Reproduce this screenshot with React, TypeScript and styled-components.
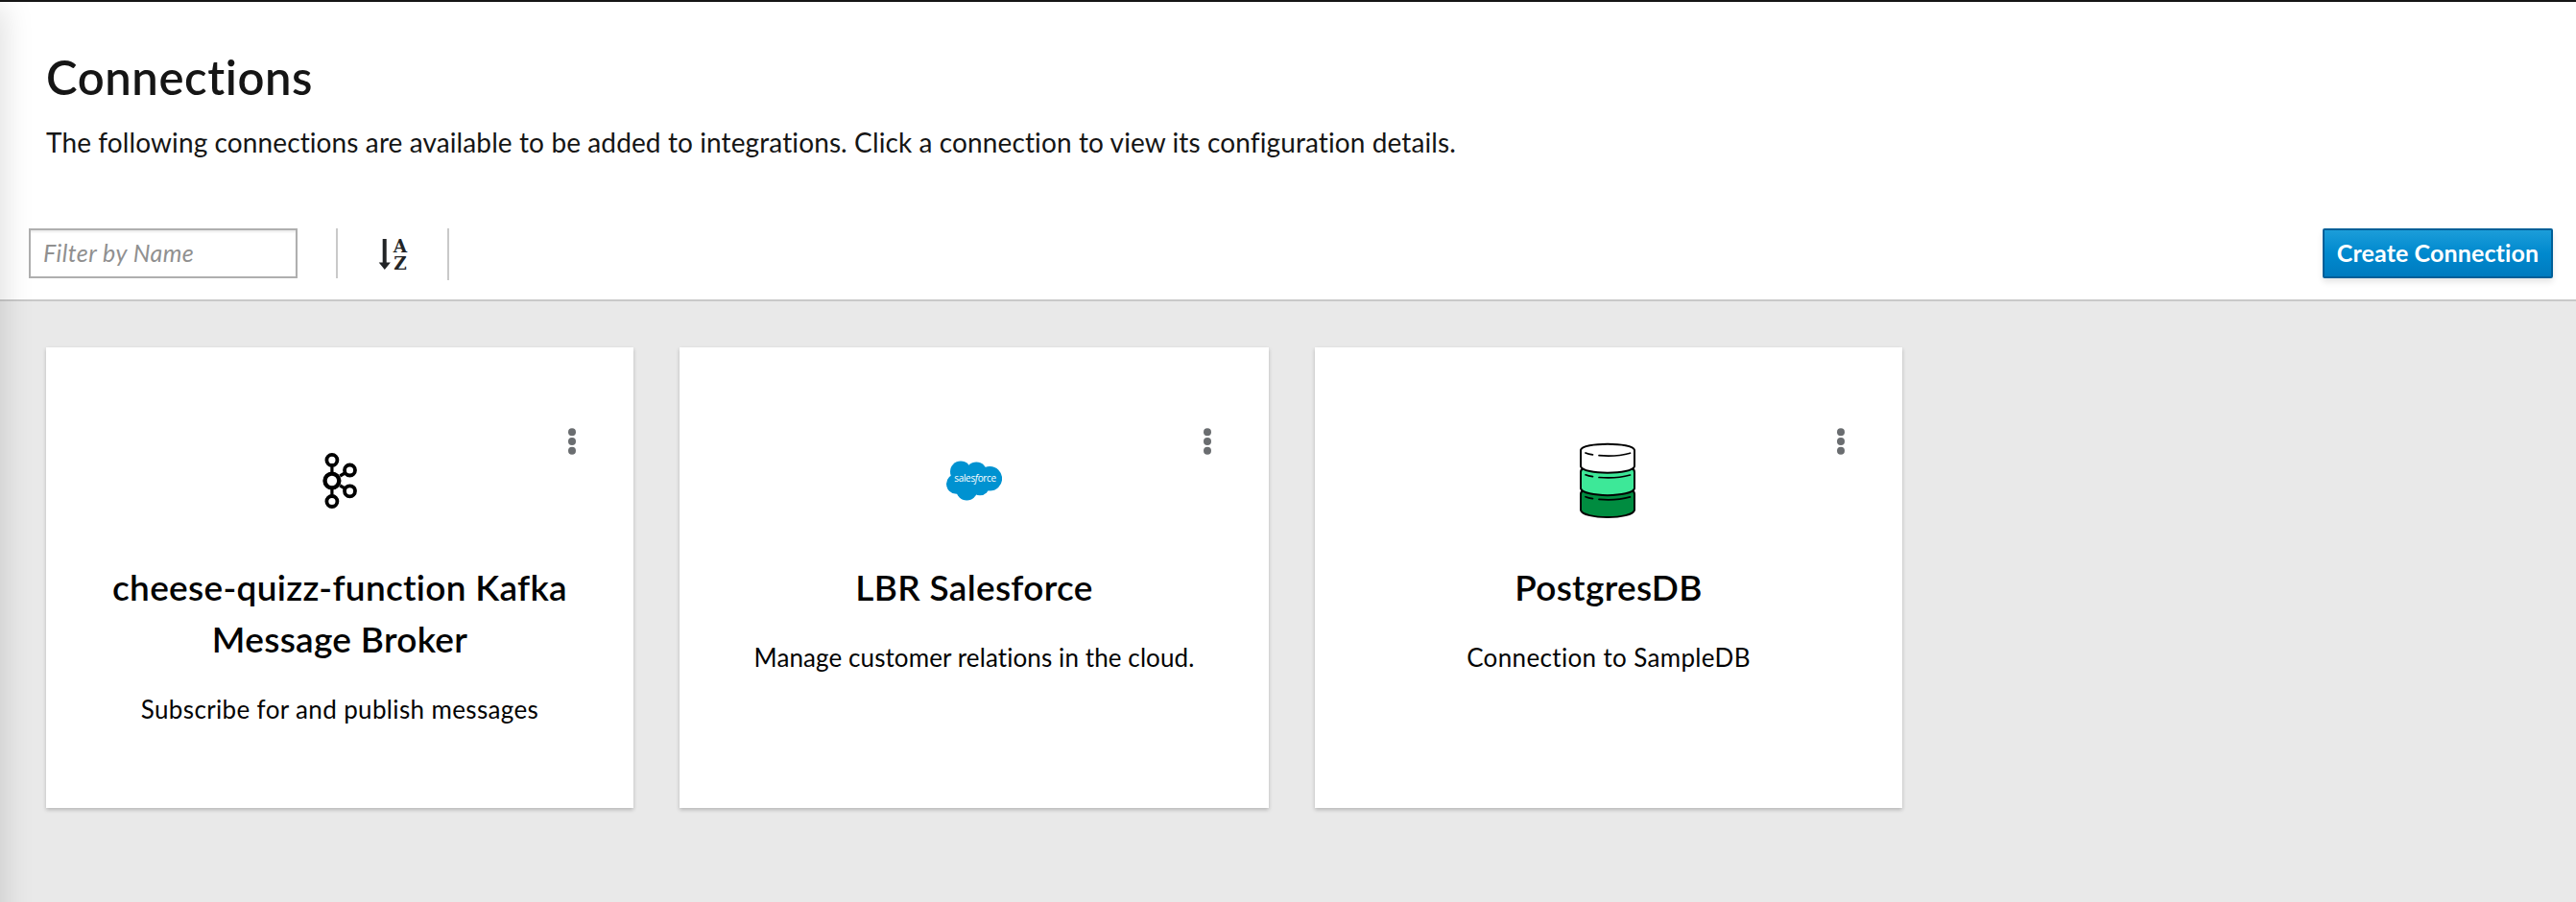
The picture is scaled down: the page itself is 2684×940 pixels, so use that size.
import React from 'react';
import styled, { createGlobalStyle } from 'styled-components';

const GlobalStyle = createGlobalStyle`
  * { box-sizing: border-box; }
  body {
    margin: 0;
    background: #e9e9e9;
    font-family: Lato, "Liberation Sans", sans-serif;
    font-variant-ligatures: none;
    color: #151515;
  }
`;

const Page = styled.div`
  position: relative;
  display: flex;
  flex-direction: column;
  height: 940px;
  overflow: hidden;
  border-top: 2px solid #151515;
`;

const EdgeShadow = styled.div`
  position: absolute;
  top: 8px;
  bottom: -40px;
  left: -40px;
  width: 40px;
  box-shadow: 0 0 32px 4px rgba(3, 3, 3, 0.13);
  pointer-events: none;
`;

const Header = styled.header`
  height: 312px;
  display: flex;
  flex-direction: column;
  background: #fff;
  border-bottom: 2px solid #c9c9c9;
`;

const Intro = styled.div`
  height: 236px;
  padding: 47px 48px 0;
`;

const Title = styled.h1`
  margin: 0;
  font-size: 49px;
  font-weight: 600;
  line-height: 62px;
  letter-spacing: 0.6px;
`;

const Lead = styled.p`
  margin: 16px 0 0;
  font-size: 28px;
  line-height: 42px;
  letter-spacing: 0.11px;
`;

const Toolbar = styled.div`
  display: flex;
  align-items: flex-start;
  padding: 0 24px 0 30px;
`;

const FilterInput = styled.input`
  width: 280px;
  height: 52px;
  padding: 0 14px 3px 13px;
  border: 2px solid #afafaf;
  border-radius: 0;
  font: inherit;
  font-size: 25px;
  letter-spacing: 0.45px;
  box-shadow: inset 0 2px 2px rgba(3, 3, 3, 0.075);
  background: #fff;
  &::placeholder {
    color: #909090;
    font-style: italic;
    opacity: 1;
  }
`;

const SortGroup = styled.div`
  display: flex;
  align-items: center;
  justify-content: center;
  width: 118px;
  height: 54px;
  margin-left: 40px;
  padding: 0 0 0 4px;
  border-right: 2px solid #c9c9c9;
  background: linear-gradient(#c9c9c9, #c9c9c9) left top / 2px 52px no-repeat;
`;

const CreateButton = styled.button`
  width: 240px;
  height: 52px;
  margin-left: auto;
  padding: 0 0 3px;
  border: 2px solid #005f98;
  border-radius: 2px;
  background: linear-gradient(#1c9dd9 0%, #0089ce 50%, #007bbf 100%);
  box-shadow: 0 4px 6px rgba(3, 3, 3, 0.1);
  color: #fff;
  font: inherit;
  font-size: 25px;
  font-weight: 700;
  letter-spacing: 0.12px;
  white-space: nowrap;
`;

const CardGrid = styled.main`
  display: grid;
  grid-template-columns: 612px 614px 612px;
  grid-auto-rows: 480px;
  gap: 48px;
  padding: 48px;
`;

const Card = styled.article`
  position: relative;
  display: flex;
  flex-direction: column;
  align-items: center;
  padding-top: 91px;
  background: #fff;
  box-shadow: 0 2px 4px rgba(3, 3, 3, 0.22);
  color: #030303;
  text-align: center;
`;

const Kebab = styled.button`
  position: absolute;
  top: 84px;
  right: 60px;
  display: flex;
  padding: 0;
  border: 0;
  background: none;
`;

const Logo = styled.div`
  display: flex;
  align-items: center;
  justify-content: center;
  width: 96px;
  height: 96px;
`;

const CardTitle = styled.h2`
  width: 492px;
  margin: 36px 0 0;
  font-size: 37px;
  font-weight: 600;
  line-height: 54px;
  letter-spacing: 0.3px;
`;

const CardText = styled.p<{ $tracking: number }>`
  margin: 27px 0 0;
  font-size: 26px;
  line-height: 39px;
  letter-spacing: ${({ $tracking }) => $tracking}px;
`;

const SortSvg = styled.svg`
  overflow: visible;
`;

const SortIcon = () => (
  <SortSvg width="32" height="36" viewBox="0 0 32 36" fill="#222426">
    <path d="M4.700 2h4v24.500h4.200L6.800 34 .7 26.500h4z" />
    <text x="23" y="15.600" textAnchor="middle" fontFamily="DejaVu Serif, serif" fontWeight="700" fontSize="18.500">A</text>
    <text x="23" y="34" textAnchor="middle" fontFamily="DejaVu Serif, serif" fontWeight="700" fontSize="18.500">Z</text>
  </SortSvg>
);

const KebabIcon = () => (
  <svg width="8" height="28" viewBox="0 0 8 28" fill="#6a6d70">
    <circle cx="4" cy="4.300" r="4" />
    <circle cx="4" cy="14" r="4" />
    <circle cx="4" cy="23.700" r="4" />
  </svg>
);

const KafkaLogo = () => (
  <svg width="36" height="58" viewBox="-.2 0 36 58" fill="none" stroke="#000">
    <path d="M9.700 14v30M18 24l6-3.500M18 34l6 3.500" strokeWidth="3.200" />
    <circle cx="9.700" cy="7.400" r="5.500" strokeWidth="3.800" />
    <circle cx="9.700" cy="50.500" r="5.500" strokeWidth="3.800" />
    <circle cx="28.300" cy="18" r="5.500" strokeWidth="3.800" />
    <circle cx="28.300" cy="39.800" r="5.500" strokeWidth="3.800" />
    <circle cx="9.700" cy="29" r="7.400" strokeWidth="4.400" fill="#fff" />
  </svg>
);

const SalesforceLogo = () => (
  <svg width="58" height="42" viewBox="0 0 58 42">
    <g fill="#0092d1">
      <circle cx="15" cy="11.500" r="11" />
      <circle cx="31.300" cy="12.500" r="11" />
      <circle cx="45.300" cy="18.800" r="12.800" />
      <circle cx="10.500" cy="24.300" r="10.500" />
      <circle cx="21.300" cy="30.500" r="11" />
      <circle cx="35" cy="26.500" r="9.800" />
      <path d="M10 12h34v16H12z" />
    </g>
    <text x="30.200" y="22" textAnchor="middle" fill="#fff" fontFamily="Open Sans, sans-serif" fontWeight="500" fontSize="10" textLength="44">
      sales<tspan fontStyle="italic">f</tspan>orce
    </text>
  </svg>
);

const DatabaseLogo = () => (
  <svg width="58" height="78" viewBox="1 0 58 78" overflow="visible" stroke="#000" strokeWidth="2" strokeLinecap="round">
    <path d="M1 53q0-3 3-4h50q3 1 3 4v16.500C55 79.500 3 79.500 1 69.500z" fill="#008c40" />
    <path d="M1 30q0-3 3-4h50q3 1 3 4v17C55 56.500 3 56.500 1 47z" fill="#3de898" />
    <path d="M1 7C3-1.300 55-1.300 57 7v17C55 33 3 33 1 24z" fill="#fff" />
    <g fill="none" strokeWidth="1.700">
      <path d="M6 10q3 1.300 7.500 1.900M20 12.700q18 1.600 32.500-2.500" />
      <path d="M6 32.800q3 1.300 7.500 1.900M20 35.500q18 1.600 32.500-2.500" />
      <path d="M6 55.700q3 1.300 7.500 1.900M20 58.400q18 1.600 32.500-2.500" />
    </g>
  </svg>
);

const connections = [
  { name: 'cheese-quizz-function Kafka Message Broker', text: 'Subscribe for and publish messages', tracking: 0.36, logo: <KafkaLogo /> },
  { name: 'LBR Salesforce', text: 'Manage customer relations in the cloud.', tracking: 0.1, logo: <SalesforceLogo /> },
  { name: 'PostgresDB', text: 'Connection to SampleDB', tracking: 0.35, logo: <DatabaseLogo /> },
];

export default function App() {
  return (
    <Page>
      <GlobalStyle />
      <Header>
        <Intro>
          <Title>Connections</Title>
          <Lead>
            The following connections are available to be added to integrations. Click a connection to view its
            configuration details.
          </Lead>
        </Intro>
        <Toolbar>
          <FilterInput placeholder="Filter by Name" />
          <SortGroup><SortIcon /></SortGroup>
          <CreateButton>Create Connection</CreateButton>
        </Toolbar>
      </Header>
      <CardGrid>
        {connections.map((c) => (
          <Card key={c.name}>
            <Kebab aria-label="Actions"><KebabIcon /></Kebab>
            <Logo>{c.logo}</Logo>
            <CardTitle>{c.name}</CardTitle>
            <CardText $tracking={c.tracking}>{c.text}</CardText>
          </Card>
        ))}
      </CardGrid>
      <EdgeShadow />
    </Page>
  );
}
